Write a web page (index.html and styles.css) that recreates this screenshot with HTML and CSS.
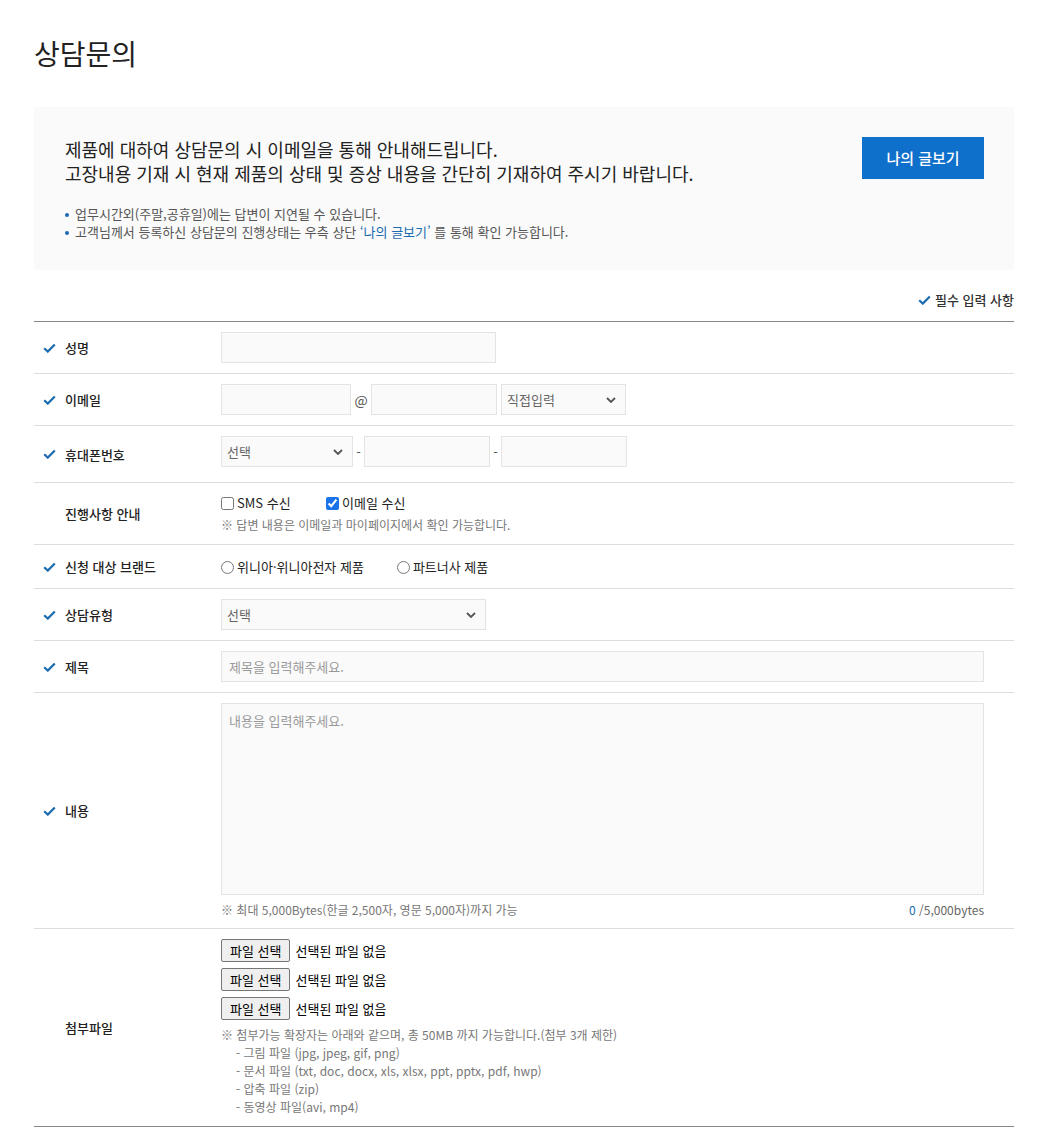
FILE: index.html
```html
<!DOCTYPE html>
<html lang="ko">
<head>
    <meta charset="UTF-8">
    <meta name="viewport" content="width=device-width, initial-scale=1.0">
    <title>상담문의</title>
    <link rel="stylesheet" href="styles.css">
</head>
<body>
    <div class="page">
        <h1 class="page-title">상담문의</h1>

        <div class="info-box">
            <div class="info-text">
                <p class="info-lead">제품에 대하여 상담문의 시 이메일을 통해 안내해드립니다.<br>고장내용 기재 시 현재 제품의 상태 및 증상 내용을 간단히 기재하여 주시기 바랍니다.</p>
                <ul class="info-list">
                    <li>업무시간외(주말,공휴일)에는 답변이 지연될 수 있습니다.</li>
                    <li>고객님께서 등록하신 상담문의 진행상태는 우측 상단 <span class="link">‘나의 글보기’</span> 를 통해 확인 가능합니다.</li>
                </ul>
            </div>
            <a class="btn-my" href="#">나의 글보기</a>
        </div>

        <div class="required-note">
            <svg class="check" width="13" height="10" viewBox="0 0 13 10"><path d="M1.2 5.2 L4.8 8.6 L11.8 1.4" fill="none" stroke="#1b6bb0" stroke-width="2.2"/></svg>
            필수 입력 사항
        </div>

        <form class="form-table" action="#" method="post">
            <div class="row">
                <div class="row-label"><svg class="check" width="13" height="10" viewBox="0 0 13 10"><path d="M1.2 5.2 L4.8 8.6 L11.8 1.4" fill="none" stroke="#1b6bb0" stroke-width="2.2"/></svg>성명</div>
                <div class="row-field">
                    <input type="text" class="input w-275">
                </div>
            </div>

            <div class="row">
                <div class="row-label"><svg class="check" width="13" height="10" viewBox="0 0 13 10"><path d="M1.2 5.2 L4.8 8.6 L11.8 1.4" fill="none" stroke="#1b6bb0" stroke-width="2.2"/></svg>이메일</div>
                <div class="row-field inline">
                    <input type="text" class="input w-130">
                    <span class="sep at">@</span>
                    <input type="text" class="input w-126">
                    <span class="select-wrap w-125">
                        <select class="select"><option>직접입력</option></select>
                        <svg class="caret" width="10" height="6" viewBox="0 0 10 6"><path d="M1 1 L5 5 L9 1" fill="none" stroke="#555" stroke-width="1.8"/></svg>
                    </span>
                </div>
            </div>

            <div class="row row-phone">
                <div class="row-label"><svg class="check" width="13" height="10" viewBox="0 0 13 10"><path d="M1.2 5.2 L4.8 8.6 L11.8 1.4" fill="none" stroke="#1b6bb0" stroke-width="2.2"/></svg>휴대폰번호</div>
                <div class="row-field inline">
                    <span class="select-wrap w-132">
                        <select class="select"><option>선택</option></select>
                        <svg class="caret" width="10" height="6" viewBox="0 0 10 6"><path d="M1 1 L5 5 L9 1" fill="none" stroke="#555" stroke-width="1.8"/></svg>
                    </span>
                    <span class="sep">-</span>
                    <input type="text" class="input w-126">
                    <span class="sep">-</span>
                    <input type="text" class="input w-126">
                </div>
            </div>

            <div class="row row-progress">
                <div class="row-label">진행사항 안내</div>
                <div class="row-field">
                    <div class="choices">
                        <label class="choice"><input type="checkbox"> SMS 수신</label>
                        <label class="choice"><input type="checkbox" checked> 이메일 수신</label>
                    </div>
                    <p class="note">※ 답변 내용은 이메일과 마이페이지에서 확인 가능합니다.</p>
                </div>
            </div>

            <div class="row row-brand">
                <div class="row-label"><svg class="check" width="13" height="10" viewBox="0 0 13 10"><path d="M1.2 5.2 L4.8 8.6 L11.8 1.4" fill="none" stroke="#1b6bb0" stroke-width="2.2"/></svg>신청 대상 브랜드</div>
                <div class="row-field">
                    <div class="choices radios">
                        <label class="choice"><input type="radio" name="brand"> 위니아·위니아전자 제품</label>
                        <label class="choice"><input type="radio" name="brand"> 파트너사 제품</label>
                    </div>
                </div>
            </div>

            <div class="row">
                <div class="row-label"><svg class="check" width="13" height="10" viewBox="0 0 13 10"><path d="M1.2 5.2 L4.8 8.6 L11.8 1.4" fill="none" stroke="#1b6bb0" stroke-width="2.2"/></svg>상담유형</div>
                <div class="row-field">
                    <span class="select-wrap w-265">
                        <select class="select"><option>선택</option></select>
                        <svg class="caret" width="10" height="6" viewBox="0 0 10 6"><path d="M1 1 L5 5 L9 1" fill="none" stroke="#555" stroke-width="1.8"/></svg>
                    </span>
                </div>
            </div>

            <div class="row">
                <div class="row-label"><svg class="check" width="13" height="10" viewBox="0 0 13 10"><path d="M1.2 5.2 L4.8 8.6 L11.8 1.4" fill="none" stroke="#1b6bb0" stroke-width="2.2"/></svg>제목</div>
                <div class="row-field">
                    <input type="text" class="input w-full" placeholder="제목을 입력해주세요.">
                </div>
            </div>

            <div class="row row-content">
                <div class="row-label"><svg class="check" width="13" height="10" viewBox="0 0 13 10"><path d="M1.2 5.2 L4.8 8.6 L11.8 1.4" fill="none" stroke="#1b6bb0" stroke-width="2.2"/></svg>내용</div>
                <div class="row-field">
                    <textarea class="textarea" placeholder="내용을 입력해주세요."></textarea>
                    <div class="textarea-foot">
                        <span class="note">※ 최대 5,000Bytes(한글 2,500자, 영문 5,000자)까지 가능</span>
                        <span class="counter"><em>0</em> /5,000bytes</span>
                    </div>
                </div>
            </div>

            <div class="row row-last">
                <div class="row-label">첨부파일</div>
                <div class="row-field">
                    <div class="file-line"><button type="button" class="file-btn">파일 선택</button><span>선택된 파일 없음</span></div>
                    <div class="file-line"><button type="button" class="file-btn">파일 선택</button><span>선택된 파일 없음</span></div>
                    <div class="file-line"><button type="button" class="file-btn">파일 선택</button><span>선택된 파일 없음</span></div>
                    <div class="file-note">
                        ※ 첨부가능 확장자는 아래와 같으며, 총 50MB 까지 가능합니다.(첨부 3개 제한)<br>
                        <span class="indent">- 그림 파일 (jpg, jpeg, gif, png)</span><br>
                        <span class="indent">- 문서 파일 (txt, doc, docx, xls, xlsx, ppt, pptx, pdf, hwp)</span><br>
                        <span class="indent">- 압축 파일 (zip)</span><br>
                        <span class="indent">- 동영상 파일(avi, mp4)</span>
                    </div>
                </div>
            </div>
        </form>
    </div>
</body>
</html>
```

FILE: styles.css
```css
body {
    margin: 0;
    font-family: "Noto Sans CJK KR", "Noto Sans", sans-serif;
    color: #222;
    background-color: #fff;
}
.page {
    width: 980px;
    padding: 34px 0 40px 34px;
}
.page-title {
    margin: 0 0 34px;
    font-size: 28px;
    font-weight: 400;
    line-height: 39px;
    color: #222;
}

/* info box */
.info-box {
    display: flex;
    justify-content: space-between;
    align-items: flex-start;
    background-color: #fafafa;
    padding: 30px 30px 29px 31px;
}
.info-lead {
    margin: 0;
    font-size: 18px;
    font-weight: 400;
    line-height: 24px;
    color: #222;
}
.info-list {
    list-style: none;
    margin: 20px 0 0;
    padding: 0;
    font-size: 13px;
    line-height: 18px;
    color: #555;
}
.info-list li {
    position: relative;
    padding-left: 10px;
}
.info-list li::before {
    content: "";
    position: absolute;
    left: 0;
    top: 8px;
    width: 4px;
    height: 4px;
    border-radius: 50%;
    background-color: #1b6bb0;
}
.info-list .link {
    color: #1b6bb0;
}
.btn-my {
    display: block;
    width: 122px;
    height: 42px;
    line-height: 42px;
    text-align: center;
    background-color: #0f70cc;
    color: #fff;
    font-size: 15px;
    font-weight: 500;
    text-decoration: none;
}

/* required */
.required-note {
    display: flex;
    justify-content: flex-end;
    align-items: center;
    gap: 4px;
    margin-top: 21px;
    font-size: 13px;
    font-weight: 500;
    line-height: 18px;
    color: #333;
    padding-bottom: 12px;
}

/* form table */
.form-table {
    border-top: 1px solid #888;
    border-bottom: 1px solid #888;
}
.row {
    display: flex;
    border-bottom: 1px solid #ddd;
}
.row-last {
    border-bottom: none;
}
.row-label {
    width: 178px;
    padding-left: 9px;
    display: flex;
    align-items: center;
    font-size: 13px;
    font-weight: 500;
    color: #222;
}
.row-label .check {
    margin-right: 9px;
}
.row-label:not(:has(.check)) {
    padding-left: 31px;
    width: 156px;
}
.row-field {
    flex: 1;
    padding: 10px 30px 10px 0;
    font-size: 13px;
}
.row-phone .row-field {
    padding-bottom: 15px;
}
.row-progress .row-field {
    padding-top: 11px;
    padding-bottom: 10px;
}
.row-brand .row-field {
    padding-top: 11px;
    padding-bottom: 10px;
}
.row-content .row-field {
    padding-bottom: 9px;
}
.row-last .row-field {
    padding-top: 10px;
    padding-bottom: 10px;
}
.inline {
    display: flex;
    align-items: center;
}
.sep {
    width: 11px;
    text-align: center;
    color: #555;
    font-size: 13px;
}
.sep.at {
    width: 20px;
    font-size: 14px;
}

.input,
.select,
.textarea {
    box-sizing: border-box;
    height: 31px;
    border: 1px solid #e3e3e3;
    background-color: #fafafa;
    font-family: inherit;
    font-size: 13px;
    color: #666;
    padding: 0 7px;
    outline: none;
}
.input::placeholder,
.textarea::placeholder {
    color: #999;
}
.w-275 { width: 275px; }
.w-130 { width: 130px; }
.w-126 { width: 126px; }
.w-125 { width: 125px; margin-left: 4px; }
.w-132 { width: 132px; }
.w-265 { width: 265px; }
.w-full { width: 100%; }

.select-wrap {
    position: relative;
    display: inline-block;
    vertical-align: top;
}
.select {
    width: 100%;
    appearance: none;
    -webkit-appearance: none;
    padding-left: 5px;
}
.caret {
    position: absolute;
    right: 10px;
    top: 13px;
    pointer-events: none;
}

/* checkbox / radio */
.choices {
    display: flex;
    line-height: 18px;
}
.choice {
    display: flex;
    align-items: center;
    gap: 3px;
    font-size: 13px;
    color: #222;
    width: 105px;
}
.choice input {
    margin: 0;
    width: 13px;
    height: 13px;
    accent-color: #1a73e8;
}
.radios {
    line-height: 22px;
}
.radios .choice {
    width: auto;
    margin-right: 33px;
}
.note {
    margin: 4px 0 0;
    font-size: 12px;
    line-height: 18px;
    color: #777;
}

/* textarea */
.textarea {
    display: block;
    width: 100%;
    height: 192px;
    padding: 7px 7px;
    resize: none;
}
.textarea-foot {
    display: flex;
    justify-content: space-between;
    align-items: center;
    margin-top: 6px;
    line-height: 18px;
}
.textarea-foot .note {
    margin: 0;
}
.counter {
    font-size: 12px;
    color: #666;
}
.counter em {
    font-style: normal;
    color: #1b6bb0;
}

/* files */
.file-line {
    display: flex;
    align-items: center;
    gap: 5px;
    height: 23px;
    margin-bottom: 6px;
    font-size: 13px;
    color: #000;
}
.file-btn {
    height: 23px;
    padding: 0 8px;
    border: 1px solid #767676;
    border-radius: 2px;
    background-color: #efefef;
    font-family: inherit;
    font-size: 13px;
    color: #000;
}
.file-note {
    font-size: 12px;
    line-height: 18px;
    color: #777;
}
.file-note .indent {
    padding-left: 15px;
}
```
